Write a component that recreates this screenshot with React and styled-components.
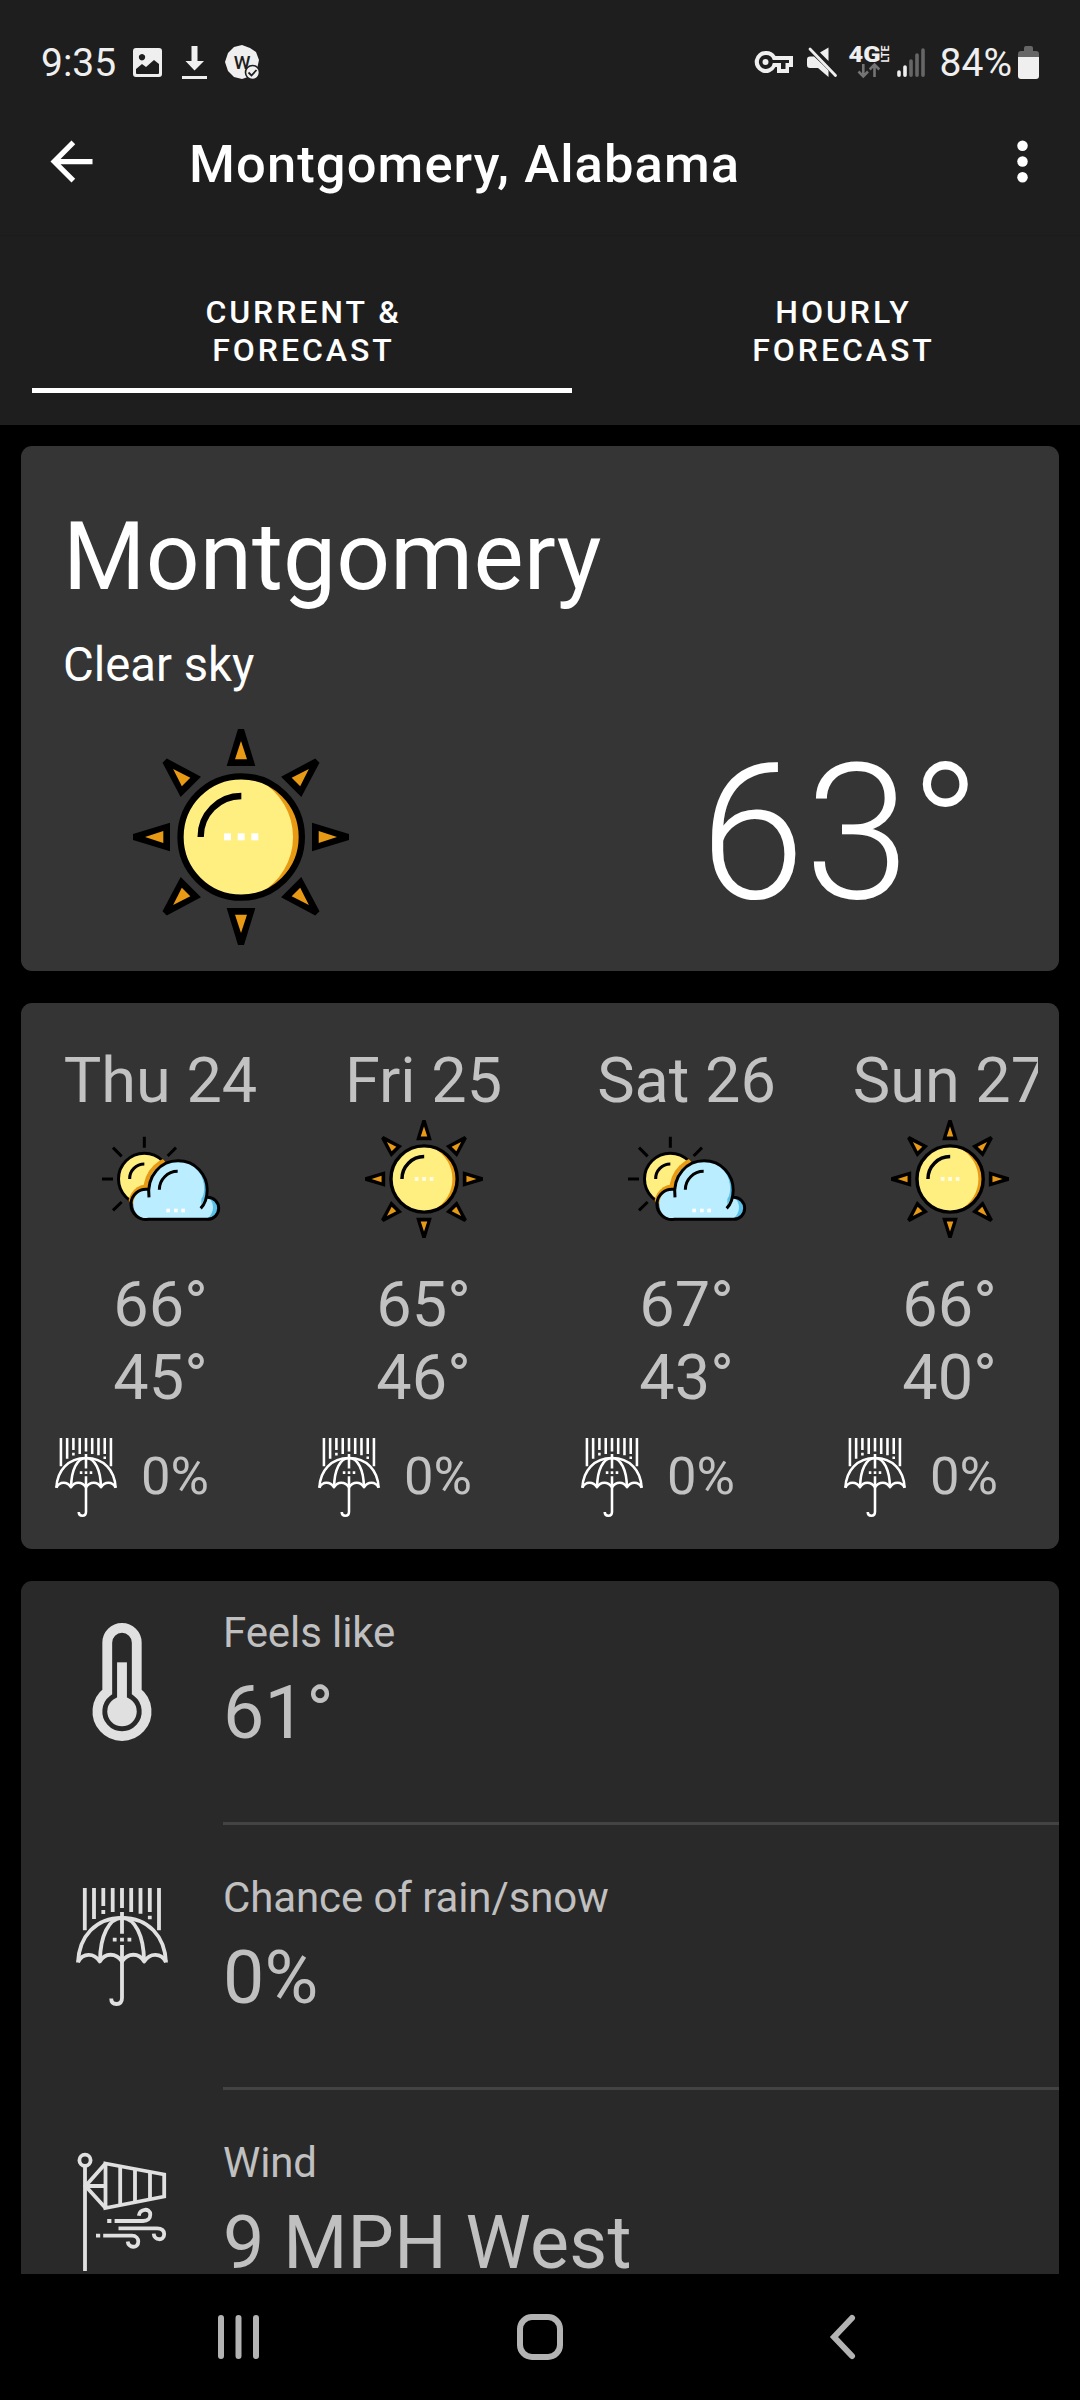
import React from "react";
import styled, { createGlobalStyle } from "styled-components";

const GlobalStyle = createGlobalStyle`
  * { box-sizing: border-box; }
  body { margin: 0; background: #000; font-family: Roboto, "Noto Sans", sans-serif; }
`;

const Screen = styled.div`
  width: 1080px;
  height: 2400px;
  display: flex;
  flex-direction: column;
  background: #000;
  overflow: hidden;
`;

const Header = styled.header`
  flex: none;
  height: 425px;
  background: #1e1e1e;
  display: flex;
  flex-direction: column;
`;

const StatusBar = styled.div`
  height: 88px;
  padding: 36px 41px 0 41px;
  display: flex;
  align-items: center;
  justify-content: space-between;
  color: #efefef;
`;

const StatusText = styled.span`
  font-size: 39px;
  line-height: 46px;
  margin: 2px ${(p) => p.$after || 0}px 0 ${(p) => p.$before || 0}px;
`;

const StatusGroup = styled.div`
  display: flex;
  align-items: center;
`;

const Glyph = styled.svg`
  display: block;
  flex: none;
  overflow: visible;
  width: ${(p) => p.$w}px;
  height: ${(p) => p.$h}px;
  margin-left: ${(p) => p.$ml || 0}px;
`;

const Toolbar = styled.div`
  height: 147px;
  padding: 0 26px 0 40px;
  display: flex;
  align-items: center;
`;

const Title = styled.h1`
  flex: 1;
  margin: 5px 0 0 86px;
  font-size: 52.5px;
  line-height: 62px;
  font-weight: 500;
  letter-spacing: 1.1px;
  color: #fff;
`;

const Tabs = styled.nav`
  flex: 1;
  padding-left: 32px;
  display: flex;
  border-top: 1px solid #1b1b1b;
  overflow: hidden;
`;

const Tab = styled.div`
  flex: none;
  width: 540px;
  height: 157px;
  padding: 57px 0 0 3px;
  border-bottom: 5px solid ${(p) => (p.$active ? "#fff" : "transparent")};
  color: #fff;
  font-size: 32px;
  font-weight: 500;
  line-height: 38px;
  letter-spacing: 2.95px;
  text-align: center;
  text-transform: uppercase;
  white-space: pre-line;
`;

const Content = styled.main`
  flex: 1;
  min-height: 0;
  padding: 21px 21px 0;
  display: flex;
  flex-direction: column;
  gap: 32px;
  overflow: hidden;
`;

const Card = styled.section`
  flex: none;
  border-radius: 11px;
  background: #353535;
  overflow: hidden;
`;

const CurrentCard = styled(Card)`
  height: 525px;
  padding: 55px 42px 0;
  color: #fff;
`;

const City = styled.h2`
  margin: 0;
  font-size: 94.5px;
  line-height: 112px;
  font-weight: 400;
  letter-spacing: 0.15px;
`;

const Condition = styled.p`
  margin: 24px 0 0;
  font-size: 47.25px;
  line-height: 56px;
`;

const CurrentRow = styled.div`
  margin-top: 36px;
  padding: 0 36px 0 70px;
  display: flex;
  justify-content: space-between;
  align-items: flex-start;
`;

const CurrentTemp = styled.div`
  font-size: 189px;
  line-height: 209px;
  font-weight: 300;
`;

const DaysCard = styled(Card)`
  height: 546px;
  padding: 41px 21px 0 8px;
  background: #343434;
`;

const DaysStrip = styled.div`
  display: flex;
  overflow: hidden;
  color: #c2c2c2;
`;

const Day = styled.div`
  flex: none;
  width: 263px;
  display: flex;
  flex-direction: column;
  align-items: center;
  font-size: 63px;
  line-height: 73px;
`;

const DayIcon = styled.div`
  margin: 3px 0 30px;
`;

const DayRain = styled.div`
  align-self: stretch;
  margin-top: 24px;
  padding-left: 26px;
  display: flex;
  align-items: flex-start;
  gap: 24px;
  font-size: 52.5px;
  line-height: 76px;
`;

const DetailsCard = styled(Card)`
  flex: 1;
  min-height: 0;
  background: #292929;
  border-radius: 11px 11px 0 0;
`;

const DetailList = styled.div`
  margin-top: -21px;
`;

const DetailRow = styled.div`
  height: 265px;
  display: grid;
  grid-template-columns: 202px 1fr;
`;

const DetailIcon = styled.div`
  padding-top: 63px;
  display: flex;
  justify-content: center;
  align-items: flex-start;
`;

const DetailBody = styled.div`
  padding-top: 48px;
  border-bottom: 3px solid #434343;
  color: #c0c0c0;
`;

const DetailLabel = styled.div`
  font-size: 42px;
  line-height: 50px;
  letter-spacing: -0.1px;
`;

const DetailValue = styled.div`
  margin-top: 12px;
  font-size: 73.5px;
  line-height: 86px;
  letter-spacing: 0.3px;
`;

const NavBar = styled.footer`
  flex: none;
  height: 126px;
  padding: 0 86px 0 87px;
  display: grid;
  grid-template-columns: repeat(3, 1fr);
  align-items: center;
  justify-items: center;
`;

const RAYS = [0, 45, 90, 135, 180, 225, 270, 315];

function Sun({ size, dotOpacity = 1 }) {
  return (
    <Glyph $w={size} $h={size} viewBox="0 0 648 648">
      {RAYS.map((a) => (
        <g key={a} transform={`rotate(${a} 324 324)`}>
          <path d="M315 0h18l34 111h-86z" fill="#000" />
          <path d="M324 36l18 55h-36z" fill="#e89a14" />
        </g>
      ))}
      <circle cx="324.5" cy="324" r="182" fill="#e89a14" />
      <path d="M381 156A192 192 0 0 1 381 492A178 178 0 1 1 381 156z" fill="#ffee80" />
      <circle cx="324.5" cy="324" r="182" fill="none" stroke="#000" strokeWidth="19" />
      <path d="M325 201A122 122 0 0 0 203 324" fill="none" stroke="#000" strokeWidth="19" />
      <g fill="#fff" opacity={dotOpacity}>
        <rect x="273" y="313" width="21" height="21" />
        <rect x="314" y="313" width="21" height="21" />
        <rect x="355" y="313" width="21" height="21" />
      </g>
    </Glyph>
  );
}

function PartlyCloudy({ size, id }) {
  return (
    <Glyph $w={size} $h={size} viewBox="0 0 354 354">
      <defs>
        <clipPath id={`sun-${id}`}>
          <circle cx="127" cy="177" r="82" />
        </clipPath>
      </defs>
      <path
        d="M127 50V83M222 83L197 108M33 83L59 109M0 177H33M33 271L59 246"
        stroke="#000"
        strokeWidth="9"
      />
      <circle cx="127" cy="177" r="77.5" fill="#ffee80" stroke="#000" strokeWidth="9" />
      <g clipPath={`url(#sun-${id})`} fill="#e89a14">
        <circle cx="228" cy="210" r="104" />
        <circle cx="139" cy="252" r="60" />
      </g>
      <path d="M127 132A44 44 0 0 0 83 177" fill="none" stroke="#000" strokeWidth="9" />
      <g fill="#5bc0e8">
        <circle cx="228" cy="210" r="87.5" />
        <circle cx="316" cy="265" r="33" />
      </g>
      <g fill="#b9edff">
        <path d="M228 122C320 135 312 225 298 236V298H139A45 45 0 0 1 139 207C138 160 170 122 228 122z" />
        <path d="M296 262C302 238 312 234 320 234C342 252 334 288 312 297H280z" />
      </g>
      <path
        d="M141 232C133 165 178 122.500 228 122.500C281 122.500 315.500 164 315.500 210Q315.500 245 296 265M314 232H317A33 33 0 0 1 317 298H139A45.500 45.500 0 1 1 139 208"
        fill="none"
        stroke="#000"
        strokeWidth="9"
      />
      <path d="M227 154A55 55 0 0 0 172 209" fill="none" stroke="#000" strokeWidth="9" />
      <g fill="#fff">
        <rect x="193" y="266" width="11" height="11" />
        <rect x="216" y="266" width="11" height="11" />
        <rect x="238" y="266" width="11" height="11" />
      </g>
    </Glyph>
  );
}

function Umbrella({ width, height, color }) {
  return (
    <Glyph $w={width} $h={height} viewBox="0 0 92 118" preserveAspectRatio="none">
      <g fill="none" stroke={color} strokeWidth="3.800">
        <path d="M8.800 0V42.300M18 0V31M27.300 0V18M27.300 22V26M36.700 0V24M46 0V20M55.200 0V24M64.500 0V25.700M73.800 0V24M73.800 27.700V31.300M83 0V42.300" />
        <path d="M46 24V45.700M46 57V110Q46 116 40.500 116Q35.200 116 35.200 110.500" />
        <path d="M2 74.500C3 48 20 29.800 46 29.800S89 48 90 74.500" />
        <path d="M24 73C24 48 33 29.800 46 29.800S68 48 68 73" />
        <path
          d="M2 74C7 64.500 18 64.500 23.800 73.500C29 64.500 40 64.500 46 73.500C52 64.500 63 64.500 68.200 73.500C74 64.500 85 64.500 90 74"
          strokeLinejoin="round"
        />
        <path d="M36.800 51.700H40.600M44.100 51.700H47.900M51.500 51.700H55.300" />
      </g>
    </Glyph>
  );
}

function Thermometer() {
  return (
    <Glyph $w={60} $h={118} viewBox="0 0 12 24">
      <path
        d="M3 14V4a3 3 0 0 1 6 0v10a5 5 0 1 1-6 0z"
        fill="none"
        stroke="#e0e0e0"
        strokeWidth="2"
      />
      <circle cx="6" cy="18" r="3" fill="#e0e0e0" />
      <rect x="5" y="8" width="2" height="8" fill="#e0e0e0" />
    </Glyph>
  );
}

function Windsock() {
  return (
    <Glyph $w={92} $h={118} viewBox="0 0 92 118">
      <g fill="none" stroke="#e0e0e0" strokeWidth="3.800">
        <circle cx="9" cy="7.200" r="5.600" />
        <path d="M9 13V118" />
        <path d="M29.500 10.500L88.200 21.500V43.500L29.500 55z" />
        <path d="M44.200 13V52M59 16V49M74 19V46" />
        <path d="M29.500 10.500L9.500 33L29.500 55M9.500 33H29.500" />
        <path d="M38.600 68H67C72 68 74.300 65 74.300 61.500C74.300 54.500 63.500 55.500 62.800 62.700M31.200 68H35.400" />
        <path d="M42.500 75.300H81C86 75.300 88.200 78 88.200 81C88.200 88.500 78 87.500 77.700 80.700" />
        <path d="M27.200 82.700H56C60 82.700 62.300 85.500 62.300 88.500C62.300 96 52.200 95 51.700 88.500M20 82.700H24.200" />
      </g>
    </Glyph>
  );
}

function StatusIcons() {
  return (
    <StatusGroup>
      <Glyph $w={29} $h={29} $ml={17} viewBox="0 0 29 29">
        <path
          fillRule="evenodd"
          fill="#efefef"
          d="M3 0H26Q29 0 29 3V26Q29 29 26 29H3Q0 29 0 26V3Q0 0 3 0zM9 6a3.200 3.200 0 1 0 .01 0zM3 21V25Q3 26 4 26H25Q26 26 26 25V16L21 12L13 19L9 16z"
        />
      </Glyph>
      <Glyph $w={25} $h={33} $ml={20} viewBox="0 0 25 33">
        <path d="M9.500 0H15.500V15H22L12.500 24.500L3.500 15H9.500zM0 30H25V33H0z" fill="#efefef" />
      </Glyph>
      <Glyph $w={34} $h={34} $ml={18} viewBox="0 0 34 34">
        <path d="M17 0L25 3L31 7L34 15L32 24L26 31L17 34L9 32L3 26L0 17L3 8L9 2z" fill="#efefef" />
        <text
          x="17"
          y="24"
          fontSize="19"
          fontWeight="500"
          textAnchor="middle"
          fontFamily="Roboto"
          fill="#1e1e1e"
        >
          W
        </text>
        <circle cx="27.500" cy="27.500" r="7" fill="#efefef" stroke="#1e1e1e" strokeWidth="1.600" />
        <path d="M23.500 27.500L26.500 30.500L31.500 25" fill="none" stroke="#1e1e1e" strokeWidth="1.800" />
      </Glyph>
    </StatusGroup>
  );
}

function SignalIcons() {
  return (
    <StatusGroup>
      <Glyph $w={38} $h={22} viewBox="0 0 38 22">
        <path
          fillRule="evenodd"
          fill="#efefef"
          d="M11 0A11 11 0 1 0 20.500 16H22V22H34V16H38V5H20.500A11 11 0 0 0 11 0zM11 4A7 7 0 0 1 17.800 9H34V12H30.500V18H26V12H17.800A7 7 0 1 1 11 4z"
        />
        <circle cx="10.500" cy="11" r="3" fill="#efefef" />
      </Glyph>
      <Glyph $w={30} $h={30} $ml={14} viewBox="0 0 30 30">
        <path d="M13 5.500L21.500 .5V14zM3 9.500H7L21.500 23V30L11 21H3Q0 21 0 18V12.500Q0 9.500 3 9.500z" fill="#efefef" />
        <path d="M4 1L29 28" stroke="#1e1e1e" strokeWidth="5" />
        <path d="M3 2L28.500 28.500" stroke="#efefef" strokeWidth="2.800" strokeLinecap="round" />
      </Glyph>
      <Glyph $w={40} $h={32} $ml={12} viewBox="0 0 40 32">
        <text
          x="-0.500"
          y="16"
          fontSize="22"
          fontWeight="900"
          fontFamily="Roboto"
          fill="#efefef"
          textLength="32"
          lengthAdjust="spacingAndGlyphs"
        >
          4G
        </text>
        <text
          transform="translate(39.5 16.500) rotate(-90)"
          fontSize="10"
          fontWeight="700"
          fontFamily="Roboto"
          fill="#efefef"
          textLength="17"
          lengthAdjust="spacingAndGlyphs"
        >
          LTE
        </text>
        <path
          d="M14.300 18V30M9.500 25.500L14.300 30.300L19 25.500M25.500 31V19M20.700 23.500L25.500 18.700L30.300 23.500"
          fill="none"
          stroke="#747474"
          strokeWidth="2.600"
        />
      </Glyph>
      <Glyph $w={28} $h={29} $ml={8} viewBox="0 0 28 29">
        <g strokeWidth="3.600" strokeLinecap="round">
          <path d="M2 24V27.200M8 19V27.200" stroke="#efefef" />
          <path d="M14 13V27.200M20 7V27.200M26 2V27.200" stroke="#666" />
        </g>
      </Glyph>
      <StatusText $before={15} $after={6}>84%</StatusText>
      <Glyph $w={21} $h={33} viewBox="0 0 21 33">
        <path d="M0 11V8Q0 5 3 5H6V2Q6 0 8 0H13Q15 0 15 2V5H18Q21 5 21 8V11z" fill="#666" />
        <path d="M0 11H21V30Q21 33 18 33H3Q0 33 0 30z" fill="#efefef" />
      </Glyph>
    </StatusGroup>
  );
}

const DAYS = [
  { name: "Thu 24", sky: "cloud", hi: 66, lo: 45 },
  { name: "Fri 25", sky: "sun", hi: 65, lo: 46 },
  { name: "Sat 26", sky: "cloud", hi: 67, lo: 43 },
  { name: "Sun 27", sky: "sun", hi: 66, lo: 40 },
];

const DETAILS = [
  { label: "Feels like", value: "61°", icon: <Thermometer /> },
  {
    label: "Chance of rain/snow",
    value: "0%",
    icon: <Umbrella width={92} height={118} color="#e0e0e0" />,
  },
  { label: "Wind", value: "9 MPH West", icon: <Windsock /> },
];

export default function App() {
  return (
    <Screen>
      <GlobalStyle />
      <Header>
        <StatusBar>
          <StatusGroup>
            <StatusText>9:35</StatusText>
            <StatusIcons />
          </StatusGroup>
          <SignalIcons />
        </StatusBar>
        <Toolbar>
          <Glyph $w={63} $h={63} viewBox="0 0 24 24">
            <path d="M20 11H7.830l5.590-5.590L12 4l-8 8 8 8 1.410-1.410L7.830 13H20v-2z" fill="#fff" />
          </Glyph>
          <Title>Montgomery, Alabama</Title>
          <Glyph $w={63} $h={63} viewBox="0 0 24 24">
            <g fill="#fff">
              <circle cx="12" cy="6" r="2" />
              <circle cx="12" cy="12" r="2" />
              <circle cx="12" cy="18" r="2" />
            </g>
          </Glyph>
        </Toolbar>
        <Tabs>
          <Tab $active>{"Current &\nForecast"}</Tab>
          <Tab>{"Hourly\nForecast"}</Tab>
        </Tabs>
      </Header>
      <Content>
        <CurrentCard>
          <City>Montgomery</City>
          <Condition>Clear sky</Condition>
          <CurrentRow>
            <Sun size={216} />
            <CurrentTemp>63°</CurrentTemp>
          </CurrentRow>
        </CurrentCard>
        <DaysCard>
          <DaysStrip>
            {DAYS.map((d) => (
              <Day key={d.name}>
                <div>{d.name}</div>
                <DayIcon>
                  {d.sky === "sun" ? (
                    <Sun size={118} dotOpacity={0.8} />
                  ) : (
                    <PartlyCloudy size={118} id={d.name.slice(0, 3)} />
                  )}
                </DayIcon>
                <div>{d.hi}°</div>
                <div>{d.lo}°</div>
                <DayRain>
                  <Umbrella width={62} height={79} color="#fff" />
                  <span>0%</span>
                </DayRain>
              </Day>
            ))}
          </DaysStrip>
        </DaysCard>
        <DetailsCard>
          <DetailList>
            {DETAILS.map((d) => (
              <DetailRow key={d.label}>
                <DetailIcon>{d.icon}</DetailIcon>
                <DetailBody>
                  <DetailLabel>{d.label}</DetailLabel>
                  <DetailValue>{d.value}</DetailValue>
                </DetailBody>
              </DetailRow>
            ))}
          </DetailList>
        </DetailsCard>
      </Content>
      <NavBar>
        <Glyph $w={41} $h={44} viewBox="0 0 41 44">
          <path d="M3 3V41M20.500 3V41M38 3V41" stroke="#b3b3b3" strokeWidth="6" strokeLinecap="round" />
        </Glyph>
        <Glyph $w={46} $h={46} viewBox="0 0 46 46">
          <rect x="3" y="3" width="40" height="40" rx="12" fill="none" stroke="#b3b3b3" strokeWidth="6" />
        </Glyph>
        <Glyph $w={25} $h={44} viewBox="0 0 25 44">
          <path d="M22 3L4 22L22 41" fill="none" stroke="#b3b3b3" strokeWidth="6" strokeLinecap="round" />
        </Glyph>
      </NavBar>
    </Screen>
  );
}
